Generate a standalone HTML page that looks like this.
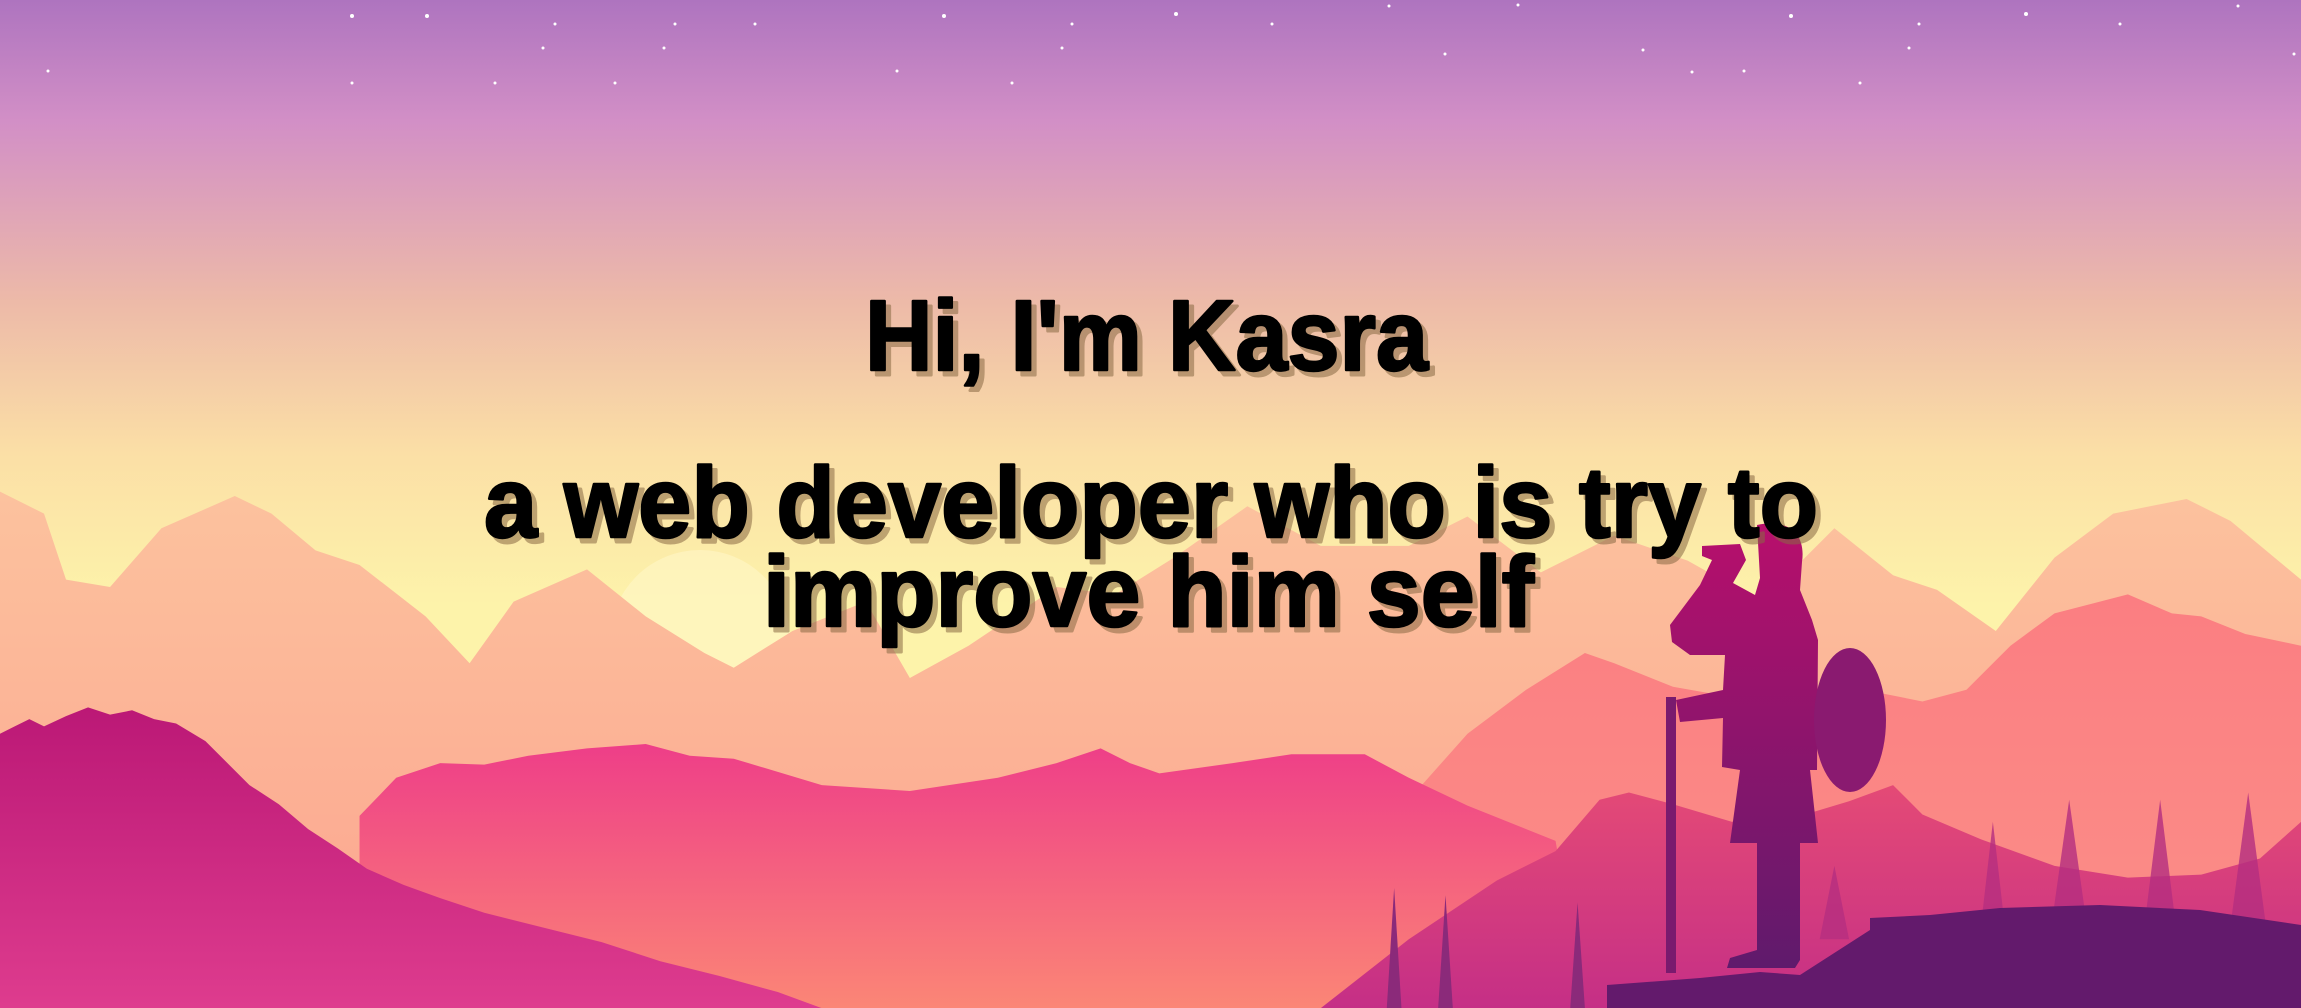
<!DOCTYPE html>
<html><head><meta charset="utf-8"><style>
html,body{margin:0;padding:0;width:2301px;height:1008px;overflow:hidden}
svg{display:block}
</style></head><body>
<svg width="2301" height="1008" viewBox="0 0 2301 1008" xmlns="http://www.w3.org/2000/svg">
<defs>
<linearGradient id="sky" x1="0" y1="0" x2="0" y2="1">
<stop offset="0" stop-color="#ae74bf"/><stop offset="0.12" stop-color="#d28fc6"/>
<stop offset="0.3" stop-color="#edbaa8"/><stop offset="0.45" stop-color="#fbdfa6"/>
<stop offset="0.6" stop-color="#fdf3aa"/><stop offset="1" stop-color="#fdf3aa"/>
</linearGradient>
<linearGradient id="l1" x1="0" y1="0" x2="0" y2="1"><stop offset="0" stop-color="#fcc29e"/><stop offset="1" stop-color="#fca38e"/></linearGradient>
<linearGradient id="l2" x1="0" y1="0" x2="0" y2="1"><stop offset="0" stop-color="#fb7e82"/><stop offset="1" stop-color="#fb9088"/></linearGradient>
<linearGradient id="l3" x1="0" y1="0" x2="0" y2="1"><stop offset="0" stop-color="#ee3e88"/><stop offset="1" stop-color="#fb8676"/></linearGradient>
<linearGradient id="hill" x1="0" y1="0" x2="0" y2="1"><stop offset="0" stop-color="#bb1876"/><stop offset="1" stop-color="#de3c8e"/></linearGradient>
<linearGradient id="rh" x1="0" y1="0" x2="0" y2="1"><stop offset="0" stop-color="#e44a76"/><stop offset="1" stop-color="#c52f86"/></linearGradient>
<linearGradient id="man" x1="0" y1="0" x2="0" y2="1"><stop offset="0" stop-color="#b80f6c"/><stop offset="1" stop-color="#5f1a6c"/></linearGradient>
</defs>
<rect width="2301" height="1008" fill="url(#sky)"/>
<g fill="#fff">
<circle cx="352" cy="16" r="2"/><circle cx="427" cy="16" r="2"/><circle cx="944" cy="16" r="2"/><circle cx="1176" cy="14" r="2"/><circle cx="1389" cy="6" r="1.5"/><circle cx="1518" cy="5" r="1.5"/><circle cx="1791" cy="16" r="2"/><circle cx="2026" cy="14" r="2"/><circle cx="2238" cy="6" r="1.5"/>
<circle cx="555" cy="24" r="1.5"/><circle cx="675" cy="24" r="1.5"/><circle cx="755" cy="24" r="1.5"/><circle cx="1072" cy="24" r="1.5"/><circle cx="1272" cy="24" r="1.5"/><circle cx="1919" cy="24" r="1.5"/><circle cx="2120" cy="24" r="1.5"/>
<circle cx="543" cy="48" r="1.5"/><circle cx="664" cy="48" r="1.5"/><circle cx="1062" cy="48" r="1.5"/><circle cx="1445" cy="54" r="1.5"/><circle cx="1643" cy="50" r="1.5"/><circle cx="1909" cy="48" r="1.5"/><circle cx="2294" cy="54" r="1.5"/>
<circle cx="48" cy="71" r="1.5"/><circle cx="897" cy="71" r="1.5"/><circle cx="1692" cy="72" r="1.5"/><circle cx="1744" cy="71" r="1.5"/>
<circle cx="352" cy="83" r="1.5"/><circle cx="495" cy="83" r="1.5"/><circle cx="615" cy="83" r="1.5"/><circle cx="1012" cy="83" r="1.5"/><circle cx="1860" cy="83" r="1.5"/>
</g>
<ellipse cx="700" cy="640" rx="90" ry="90" fill="#fff6c8" opacity="0.6"/>
<g transform="scale(1.4675)">
<polygon fill="url(#l1)" points="0,335 30,350 45,395 75,400 110,360 160,338 185,350 215,375 245,385 290,420 320,452 350,410 400,388 440,420 480,445 500,455 540,430 590,410 620,462 660,440 720,400 760,405 800,380 850,345 900,372 960,372 1000,352 1050,390 1100,365 1150,382 1200,410 1250,360 1290,392 1320,402 1360,430 1400,380 1440,350 1490,340 1520,355 1568,395 1568,687 0,687"/>
<polygon fill="url(#l2)" points="960,545 1000,500 1040,470 1080,445 1100,452 1140,468 1180,475 1230,478 1270,470 1310,478 1340,470 1370,440 1400,418 1450,405 1480,418 1500,420 1530,432 1568,440 1568,687 960,687"/>
<polygon fill="url(#l3)" points="245,556 270,530 300,520 330,521 360,515 400,510 440,507 470,515 500,517 560,535 620,539 680,530 720,520 750,510 770,520 790,527 840,520 880,514 930,514 960,530 1000,549 1060,573 1080,687 245,687"/>
<polygon fill="url(#rh)" points="900,687 960,640 1020,600 1060,580 1090,545 1110,540 1140,548 1180,560 1220,558 1260,546 1290,535 1310,555 1350,572 1400,590 1450,598 1500,596 1540,585 1568,560 1568,687"/>
<polygon fill="url(#hill)" points="0,500 10,495 20,490 30,495 45,488 60,482 75,487 90,484 105,490 120,493 140,505 155,520 170,535 190,548 210,565 230,578 250,592 275,603 300,612 330,622 370,632 410,642 450,655 490,665 530,676 560,687 0,687"/>
<g fill="#b52e80" opacity="0.8">
<polygon points="1350,630 1358,560 1366,630"/><polygon points="1398,630 1410,545 1422,630"/><polygon points="1462,625 1472,545 1482,625"/><polygon points="1520,630 1532,540 1544,630"/><polygon points="1240,640 1250,590 1260,640"/>
</g>
<g fill="#8b2a7a"><polygon points="1070,687 1075,615 1080,687"/><polygon points="945,687 950,605 955,687"/><polygon points="980,687 985,610 990,687"/></g>
</g>
<path fill="url(#man)" d="M1757,525 C1790,518 1806,535 1802,562 L1800,590 L1812,620 L1818,640 L1817,770 L1810,770 L1818,843 L1800,843 L1800,960 L1795,968 L1727,968 L1730,958 L1757,950 L1757,843 L1730,843 L1740,770 L1722,767 L1723,718 L1680,722 L1676,700 L1723,690 L1725,655 L1690,655 L1672,642 L1670,625 L1700,585 L1712,560 L1702,556 L1702,546 L1740,544 L1746,560 L1733,583 L1755,595 L1760,578 Z"/>
<ellipse cx="1850" cy="720" rx="36" ry="72" fill="#8a1a70"/>
<rect x="1666" y="697" width="10" height="276" fill="#7a1a6e"/>
<path fill="#631a6c" d="M1607,1008 L1607,985 L1700,978 L1760,972 L1800,975 L1870,930 L1870,918 L1930,915 L2000,908 L2100,905 L2200,910 L2301,925 L2301,1008 Z"/>
<g font-family="'Liberation Sans',sans-serif" font-weight="bold" font-size="100" stroke-linejoin="round">
<g fill="#8a6a44" stroke="#8a6a44" stroke-width="3" opacity="0.55" transform="translate(5,5)">
<text x="865" y="370" textLength="563" lengthAdjust="spacingAndGlyphs">Hi, I'm Kasra</text>
<text x="484" y="537" textLength="1334" lengthAdjust="spacingAndGlyphs">a web developer who is try to</text>
<text x="763" y="626" textLength="771" lengthAdjust="spacingAndGlyphs">improve him self</text>
</g>
<g fill="#000" stroke="#000" stroke-width="2.5">
<text x="865" y="370" textLength="563" lengthAdjust="spacingAndGlyphs">Hi, I'm Kasra</text>
<text x="484" y="537" textLength="1334" lengthAdjust="spacingAndGlyphs">a web developer who is try to</text>
<text x="763" y="626" textLength="771" lengthAdjust="spacingAndGlyphs">improve him self</text>
</g>
</g>
</svg>
</body></html>
